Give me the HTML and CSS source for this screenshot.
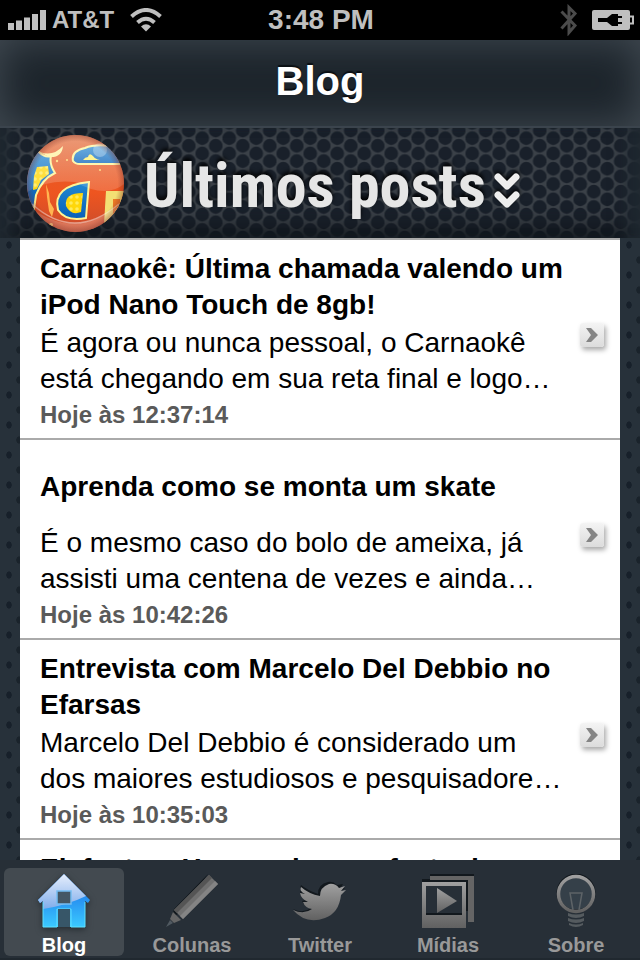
FILE: index.html
```html
<!DOCTYPE html>
<html lang="pt-BR">
<head>
<meta charset="utf-8">
<meta name="viewport" content="width=device-width, initial-scale=1">
<title>Blog</title>
<link rel="stylesheet" href="styles.css">
</head>
<body>
<div class="app">
  <div class="status">
    <div class="carrier">
      <svg width="38" height="20" viewBox="0 0 38 20" fill="#bfbfbf" aria-hidden="true"><path d="M0 13h6v7H0zM8 10.500h6V20H8zM16 7.500h6V20h-6zM24 4h6v16h-6zM32 0h6v20h-6z"/></svg>
      <span>AT&amp;T</span>
      <svg class="wifi" width="32" height="24" viewBox="0 0 32 24" fill="none" stroke="#bfbfbf" stroke-width="4" aria-hidden="true"><path d="M1.500 8.500Q16-4.500 30.500 8.500M7.500 14.500q8.500-7.500 17 0"/><path d="M11 18.500q5-4.500 10 0l-5 5z" fill="#bfbfbf" stroke="none"/></svg>
    </div>
    <time class="clock">3:48 PM</time>
    <div class="power">
      <svg width="18" height="32" viewBox="0 0 18 32" fill="none" stroke="#4b4b4b" stroke-width="3" aria-hidden="true"><path d="M1.500 7.500L15 21.500l-6 7V3.500l6 6L1.500 24.500"/></svg>
      <svg width="42" height="20" viewBox="0 0 42 20" aria-hidden="true"><rect width="38" height="20" rx="2" fill="#bfbfbf"/><path d="M38 6.500h3v7h-3" fill="none" stroke="#bfbfbf" stroke-width="2"/><path d="M6 8h9l5-4h6v2h4v2h-4v4h4v2h-4v2h-6l-5-4H6z" fill="#000"/></svg>
    </div>
  </div>
  <header class="navbar"><h1>Blog</h1></header>
  <main class="feed">
    <div class="banner">
      <svg class="mesh" aria-hidden="true">
        <defs><pattern id="hex" width="27" height="15.300" patternUnits="userSpaceOnUse" patternTransform="translate(6.500 2.500)"><rect width="27" height="15.300" fill="#3b4148"/><g fill="#19202a"><circle cx="6.750" cy="7.650" r="6.900"/><circle cx="20.250" cy="0" r="6.900"/><circle cx="20.250" cy="15.300" r="6.900"/></g></pattern></defs>
        <rect width="100%" height="100%" fill="url(#hex)"/>
      </svg>
      <svg class="ball" width="98" height="98" viewBox="0 0 98 98" aria-hidden="true">
        <defs>
          <clipPath id="round"><circle cx="49.500" cy="49.500" r="48.500"/></clipPath>
          <linearGradient id="orange" x2="0" y2="1"><stop offset="0" stop-color="#e0622c"/><stop offset=".6" stop-color="#ee5520"/><stop offset="1" stop-color="#c94c2c"/></linearGradient>
          <linearGradient id="blue" x2="0" y2="1"><stop offset="0" stop-color="#2389d2"/><stop offset="1" stop-color="#0860b8"/></linearGradient>
          <linearGradient id="gloss" x2="0" y2="1"><stop offset="0" stop-color="#fff" stop-opacity=".36"/><stop offset="1" stop-color="#fff" stop-opacity=".14"/></linearGradient>
          <radialGradient id="edge"><stop offset=".86" stop-color="#7a2a20" stop-opacity="0"/><stop offset="1" stop-color="#7a2a20" stop-opacity=".4"/></radialGradient>
          <pattern id="dots" width="6" height="6" patternUnits="userSpaceOnUse"><path d="M0 0h6v6H0z" fill="#ffd70a"/><circle cx="3" cy="3" r="1.800" fill="#ffeb59"/></pattern>
        </defs>
        <g clip-path="url(#round)">
          <path d="M0 0h98v98H0z" fill="url(#orange)"/>
          <g stroke="#fff394" stroke-width="2">
            <path d="M-2 8L13 18q6 6 12 4-2 8 4 17-13 6-19 22l-2 14L-4 62z" fill="url(#blue)"/>
            <path d="M47 27q-2-10 12-13 9-4 26-2l14 18H54q-5 0-7-3z" fill="url(#blue)"/>
            <path d="M32 76q-6-24 31-28l-3 36q-20 4-28-8z" fill="url(#blue)"/>
          </g>
          <path d="M8 42l3-9 11-1 1 8-8 6-4 9-4 1z" fill="url(#dots)"/>
          <path d="M57 26q2-3 5-3 1-5 5-1 2 3 7 4z" fill="#fff16b"/>
          <path d="M40 72q-2-13 17-13l-2 19q-10 4-15-6z" fill="url(#dots)"/>
          <path d="M80 57h18v17L84 91l-6-1z" fill="#f3df74"/><path d="M87 65h7v17l-7 6z" fill="#ed7a25"/>
          <path d="M14 18q13 5 23-6-1 12-14 11z" fill="#fff19b"/>
          <path d="M20 50l3 9 1 9 4 7-2 8-3-6-2-14z" fill="#ffb550"/>
          <g fill="#ffd36a"><circle cx="31" cy="27" r="1.200"/><circle cx="41" cy="26" r="1"/><circle cx="25" cy="91" r="2"/><circle cx="74" cy="36" r="1"/></g>
          <path d="M0 0h98v50Q80 65 49 48 20 45 0 59z" fill="url(#gloss)"/>
          <circle cx="74" cy="16" r="7" fill="#fff" opacity=".3"/>
          <path d="M4 73q44 34 90-2-15 38-45 31Q17 100 4 73z" fill="#fff" opacity=".22"/>
          <path d="M6 70q42 38 87 0" fill="none" stroke="#fff" stroke-width="1.500" opacity=".45"/>
          <circle cx="49.500" cy="49.500" r="49" fill="url(#edge)"/>
        </g>
      </svg>
      <h2>Últimos posts</h2>
      <svg class="chevrons" width="26" height="36" viewBox="0 0 26 36" fill="none" stroke="#eee" stroke-width="7" stroke-linecap="round" stroke-linejoin="round" aria-hidden="true"><path d="M4 4l9 9 9-9M4 22l9 9 9-9"/></svg>
    </div>
    <div class="posts">
      <a class="post" href="#p1"><h3>Carnaokê: Última chamada valendo um iPod Nano Touch de 8gb!</h3><p>É agora ou nunca pessoal, o Carnaokê está chegando em sua reta final e logo…</p><time>Hoje às 12:37:14</time><span class="go"><svg width="12" height="14" viewBox="0 0 12 14" aria-hidden="true"><path d="M0 0h5l7 7-7 7H0l5-7z" fill="#858585"/></svg></span></a>
      <a class="post" href="#p2"><h3>Aprenda como se monta um skate</h3><p>É o mesmo caso do bolo de ameixa, já assisti uma centena de vezes e ainda…</p><time>Hoje às 10:42:26</time><span class="go"><svg width="12" height="14" viewBox="0 0 12 14" aria-hidden="true"><path d="M0 0h5l7 7-7 7H0l5-7z" fill="#858585"/></svg></span></a>
      <a class="post" href="#p3"><h3>Entrevista com Marcelo Del Debbio no Efarsas</h3><p>Marcelo Del Debbio é considerado um dos maiores estudiosos e pesquisadore…</p><time>Hoje às 10:35:03</time><span class="go"><svg width="12" height="14" viewBox="0 0 12 14" aria-hidden="true"><path d="M0 0h5l7 7-7 7H0l5-7z" fill="#858585"/></svg></span></a>
      <a class="post" href="#p4"><h3>Elefantes: Homem invoca festa de aniversário</h3></a>
    </div>
  </main>
  <nav class="tabs">
    <svg class="defs" width="0" height="0" aria-hidden="true"><defs><linearGradient id="metal" x2="0" y2="1"><stop offset="0" stop-color="#a0a0a0"/><stop offset="1" stop-color="#616161"/></linearGradient></defs></svg>
    <a class="tab active" href="#blog">
      <svg width="52" height="54" viewBox="0 0 52 54" aria-hidden="true"><defs><linearGradient id="sky" x2="0" y2="1"><stop offset=".35" stop-color="#2385ee"/><stop offset="1" stop-color="#3bcaff"/></linearGradient><linearGradient id="shine" x2="0" y2="1"><stop offset="0" stop-color="#e6eefc"/><stop offset="1" stop-color="#80adeb"/></linearGradient></defs><path d="M26 0L52 26l-2 3-3-2v26H32V35H20v18H5V27l-3 2-2-3z" fill="url(#sky)"/><path d="M26 0l22 22Q30 31 5 35v-8l-3 2-2-3z" fill="url(#shine)"/><path d="M5 28v25h14V35h14v18h14V28" fill="none" stroke="#5fe0ff"/><path d="M19 17h14v13H19z" fill="#445765" stroke="#74bdf2" stroke-width="1.500"/><path d="M20 35h12v18H20z" fill="#375668"/></svg>
      <span>Blog</span></a>
    <a class="tab" href="#colunas">
      <svg width="52" height="54" viewBox="0 0 52 54" aria-hidden="true"><path d="M42 0L8 35l-2 8 10-5z" fill="#12181d"/><path d="M43 1l9 9-35 35-9-9z" fill="#707070"/><path d="M43 1l3 3-35 35-3-3z" fill="#555"/><path d="M49 7l3 3-35 35-3-3z" fill="#848484"/><path d="M7 38l8 8-7 3-4-4z" fill="#666"/><path d="M4 46l3 3-7 4z" fill="#505960"/></svg>
      <span>Colunas</span></a>
    <a class="tab" href="#twitter">
      <svg width="54" height="54" viewBox="0 0 54 54" aria-hidden="true"><path d="M0 35q10 5 18-1-6-1-9-7l4-1q-6-3-6-9l4 1Q6 15 8 11q6 5 17 9 0-10 10-12 5-1 9 3l6-1-3 5 5-1-5 5q-2 18-16 24-17 5-31-8z" fill="#12181d"/><path d="M0 36q11 5 19-1-7-1-9-7h5q-7-3-8-9l5 1Q6 17 8 13q8 7 19 9 0-9 9-12 6-1 10 4l6-2-4 5 5-1-5 5q-2 18-16 23-19 7-32-8z" fill="url(#metal)"/></svg>
      <span>Twitter</span></a>
    <a class="tab" href="#midias">
      <svg width="52" height="54" viewBox="0 0 52 54" aria-hidden="true"><path d="M8 0h44v4H8zM0 5h44v4H0z" fill="#12181d"/><path d="M8 2h44v46h-6V6H8z" fill="#656565"/><path fill-rule="evenodd" d="M0 8h44v46H0zM4 12v28h36V12z" fill="url(#metal)"/><path d="M4 39h36v2H4zM44 6h2v31h-2z" fill="#12181d"/><path d="M15 14l20 13-20 12z" fill="url(#metal)"/></svg>
      <span>Mídias</span></a>
    <a class="tab" href="#sobre">
      <svg width="40" height="54" viewBox="0 0 40 54" aria-hidden="true"><circle cx="20" cy="19" r="18" fill="#354049" stroke="#12181d" stroke-width="3"/><circle cx="20" cy="20" r="17.500" fill="none" stroke="url(#metal)" stroke-width="3.500"/><path d="M17 36l-3-17h12l-3 17" fill="none" stroke="#5d6367" stroke-width="1.500"/><path d="M12 39q8 3 16 0v3q-8 4-16 0zM12 44q8 3 16 0v3q-8 4-16 0zM13 49q7 3 14 0v2q-7 4-14 0z" fill="#555b5f"/></svg>
      <span>Sobre</span></a>
  </nav>
</div>
</body>
</html>
```
FILE: styles.css
```css
* { box-sizing: border-box; }
body { margin: 0; background: #242d35; font-family: "Liberation Sans", Arial, sans-serif; }
h1, h2, h3, p { margin: 0; }
a { color: inherit; text-decoration: none; }
.app { height: 100vh; display: flex; flex-direction: column; overflow: hidden; }
.status { flex: none; height: 40px; padding: 0 6px 0 8px; background: #000; color: #bfbfbf; display: grid; grid-template-columns: 1fr auto 1fr; align-items: center; font-weight: bold; }
.carrier { display: flex; align-items: center; gap: 6px; font-size: 24px; }
.wifi { margin-left: 10px; }
.clock { font-size: 28px; }
.power { display: flex; align-items: center; justify-content: flex-end; gap: 14px; }
.navbar { flex: none; height: 88px; display: flex; align-items: center; justify-content: center; padding-bottom: 4px; color: #fff; background: #1d252c; box-shadow: inset 0 0 40px #434c54; border-bottom: 2px solid #3b444d; }
.navbar h1 { font-size: 40px; text-shadow: 0 -2px 1px #0b0f13; }
.feed { flex: 1; min-height: 0; overflow: hidden; background: radial-gradient(ellipse 3px 4px at 9px 15px, #17202a 80%, transparent) 0 102px / 20px 30px, radial-gradient(ellipse 3px 4px at 19px 15px, #1a232b 80%, transparent) 0 117px / 20px 30px, #27313a; }
.banner { position: relative; height: 110px; display: flex; align-items: center; padding: 0 26px; }
.banner::after { content: ""; position: absolute; inset: 0; box-shadow: inset 24px 0 18px -12px #1f2830, inset -24px 0 18px -12px #1f2830, inset 0 -24px 24px -16px #10151a; }
.mesh { position: absolute; inset: 0; width: 100%; height: 100%; }
.ball, .banner h2, .chevrons { position: relative; z-index: 1; flex: none; }
.banner h2 { margin-left: 20px; padding-top: 6px; font: bold 62px/100px "Roboto Condensed", "Liberation Sans Narrow", sans-serif; color: #e6e6e6; text-shadow: 0 -3px 4px #000; }
.chevrons { margin: 16px 0 0 8px; overflow: visible; filter: drop-shadow(0 -2px 2px #000); }
.posts { margin: 0 20px; background: #fff; border-top: 2px solid #aaa; }
.post { display: grid; grid-template-columns: 1fr 26px; grid-template-rows: 72px 72px 32px; column-gap: 14px; row-gap: 2px; height: 200px; padding: 11px 14px 0 20px; border-bottom: 2px solid #aaa; color: #000; }
.post h3, .post p { font-size: 28px; line-height: 36px; }
.post h3 { align-self: center; }
.post time { font-size: 24px; line-height: 32px; font-weight: bold; color: #5a5a5a; }
.go { grid-column: 2; grid-row: 1 / 4; align-self: center; margin-bottom: 12px; width: 24px; height: 24px; display: flex; align-items: center; justify-content: center; border-radius: 3px; background: linear-gradient(#f4f4f4, #dcdcdc); box-shadow: 2px 3px 5px #aaa; }
.tabs { flex: none; height: 100px; padding: 8px 4px 4px; display: grid; grid-template-columns: repeat(5, 1fr); gap: 8px; background: #272f37; color: #999; border-bottom: 2px solid #20282f; }
.defs { position: absolute; }
.tab { display: flex; flex-direction: column; align-items: center; padding-top: 6px; gap: 6px; border-radius: 6px; font-size: 20px; line-height: 22px; font-weight: bold; }
.active { background: #434a50; color: #fff; }
.active svg { filter: drop-shadow(0 2px 3px #252c31); }
```
